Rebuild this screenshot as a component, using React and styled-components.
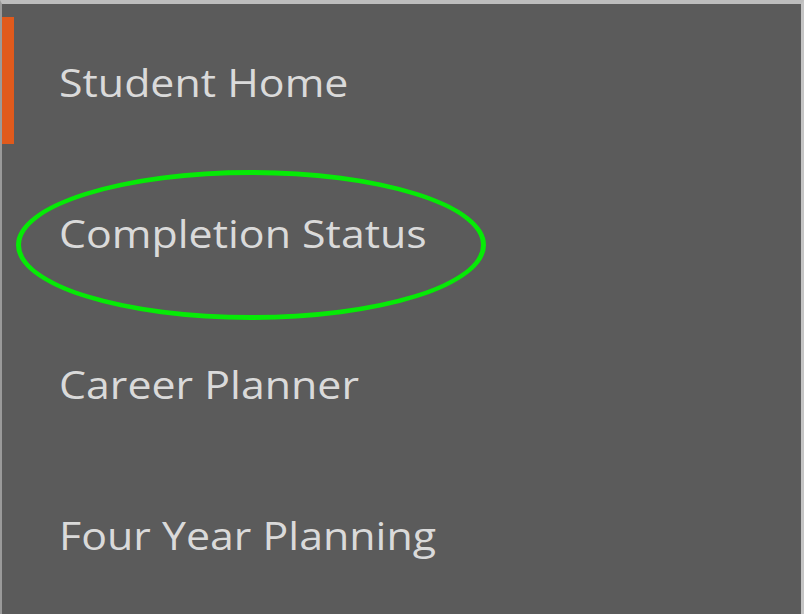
import styled, { createGlobalStyle } from 'styled-components'

const Global = createGlobalStyle`
html, body {
margin: 0;
padding: 0;
background: #5b5b5b;
}
`

const Frame = styled.div`
width: 804px;
height: 614px;
box-sizing: border-box;
background: #5b5b5b;
border-top: 4px solid #bdbdbd;
border-left: 2px solid #9a9a9a;
border-right: 3px solid #c4c4c4;
font-family: "Open Sans", "Noto Sans", sans-serif;
overflow: hidden;
`

const Menu = styled.ul`
margin: 0;
padding: 2px 0 0;
list-style: none;
display: flex;
flex-direction: column;
`

const Item = styled.li`
position: relative;
height: 151px;
display: flex;
align-items: center;
padding-left: 57px;
font-size: 39px;
color: #dadada;
`

const Label = styled.span`
display: inline-block;
transform: scaleX(1.1);
transform-origin: left center;
`

const Marker = styled.span`
position: absolute;
left: 0;
top: 11px;
width: 12px;
height: 127px;
background: #e05a1c;
`

const Circle = styled.span`
position: absolute;
left: 14px;
top: 13px;
width: 460px;
height: 140px;
border: 5px solid #06ea06;
border-radius: 50%;
`

const items = [
    { label: 'Student Home', active: true },
    { label: 'Completion Status', circled: true },
    { label: 'Career Planner' },
    { label: 'Four Year Planning' },
]

const App = () => {
    return (
        <>
            <Global />
            <Frame>
                <Menu>
                    {items.map(item => (
                        <Item key={item.label}>
                            {item.active && <Marker />}
                            {item.circled && <Circle />}
                            <Label>{item.label}</Label>
                        </Item>
                    ))}
                </Menu>
            </Frame>
        </>
    )
}

export default App
